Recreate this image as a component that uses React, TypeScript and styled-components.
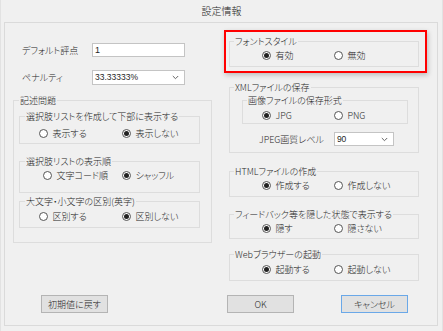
import styled, { createGlobalStyle } from "styled-components";

const GlobalStyle = createGlobalStyle`
  * {
    box-sizing: border-box;
  }
  html, body {
    margin: 0;
    padding: 0;
  }
  body {
    background: #f0f0f0;
    font-family: "Noto Sans CJK JP", "Noto Sans", sans-serif;
    font-size: 9px;
    font-weight: 300;
    font-feature-settings: "palt";
    color: #262626;
  }
`;

type Choice = { label: string; checked?: boolean };

type GroupProps = {
  $mt?: number;
  $ml?: number;
  $mr?: number;
  $pt?: number;
  $pb?: number;
  $pr?: number;
  $pl?: number;
};

function App() {
  return (
    <Window>
      <GlobalStyle />
      <TitleBar>設定情報</TitleBar>
      <Panel>
        <Column>
          <FieldRow $mt={13}>
            <FieldLabel>デフォルト評点</FieldLabel>
            <TextBox>1</TextBox>
          </FieldRow>
          <FieldRow $mt={13}>
            <FieldLabel>ペナルティ</FieldLabel>
            <Select $w={93}>
              33.33333%
              <Chevron />
            </Select>
          </FieldRow>

          <Group $mt={8.5} $pl={5} $pr={11} $pb={14}>
            <Legend $lo={0}>記述問題</Legend>
            <Group $mt={3} $pt={4} $pb={3.5}>
              <Legend $lo={5}>選択肢リストを作成して下部に表示する</Legend>
              <RadioRow
                $pad={18.5}
                $col={83}
                items={[{ label: "表示する" }, { label: "表示しない", checked: true }]}
              />
            </Group>
            <Group $mt={10.5} $pt={1} $pb={10.5}>
              <Legend $lo={5}>選択肢リストの表示順</Legend>
              <RadioRow
                $pad={22.5}
                $col={79}
                items={[{ label: "文字コード順" }, { label: "シャッフル", checked: true }]}
              />
            </Group>
            <Group $mt={1.5} $pt={2} $pb={4.5}>
              <Legend $lo={5}>大文字・小文字の区別(英字)</Legend>
              <RadioRow
                $pad={18.5}
                $col={83}
                items={[{ label: "区別する" }, { label: "区別しない", checked: true }]}
              />
            </Group>
          </Group>
        </Column>

        <Column>
          <Highlight>
            <Group $pt={1.5} $pb={4}>
              <Legend>フォントスタイル</Legend>
              <RadioRow
                $pad={31.5}
                $col={72}
                items={[{ label: "有効", checked: true }, { label: "無効" }]}
              />
            </Group>
          </Highlight>

          <Group $mt={7.5} $ml={5} $mr={8} $pb={6}>
            <Legend>XMLファイルの保存</Legend>
            <Group $ml={12} $mr={10} $pt={2} $pb={1.5}>
              <Legend>画像ファイルの保存形式</Legend>
              <RadioRow
                $pad={18.5}
                $col={72}
                items={[{ label: "JPG", checked: true }, { label: "PNG" }]}
              />
            </Group>
            <QualityRow>
              <span>JPEG画質レベル</span>
              <Select $w={60}>
                90
                <Chevron />
              </Select>
            </QualityRow>
          </Group>

          <Group $mt={11.5} $ml={5} $mr={8} $pt={1.5} $pb={4}>
            <Legend>HTMLファイルの作成</Legend>
            <RadioRow
              $pad={31.5}
              $col={72}
              items={[{ label: "作成する", checked: true }, { label: "作成しない" }]}
            />
          </Group>

          <Group $mt={10.5} $ml={5} $mr={8} $pt={1} $pb={3.5}>
            <Legend>フィードバック等を隠した状態で表示する</Legend>
            <RadioRow
              $pad={31.5}
              $col={72}
              items={[{ label: "隠す", checked: true }, { label: "隠さない" }]}
            />
          </Group>

          <Group $mt={8.5} $ml={5} $mr={8} $pt={2} $pb={4.5}>
            <Legend>Webブラウザーの起動</Legend>
            <RadioRow
              $pad={31.5}
              $col={72}
              items={[{ label: "起動する", checked: true }, { label: "起動しない" }]}
            />
          </Group>
        </Column>

        <ButtonCell>
          <Button $ml={28}>初期値に戻す</Button>
        </ButtonCell>
        <ButtonCell>
          <Button $ml={3}>OK</Button>
          <Button $ml={47} $focused>
            キャンセル
          </Button>
        </ButtonCell>
      </Panel>
    </Window>
  );
}

function RadioRow({ items, $pad, $col }: { items: Choice[]; $pad: number; $col: number }) {
  return (
    <Choices $pad={$pad} $col={$col}>
      {items.map((it) => (
        <Choice key={it.label}>
          <Dot $checked={!!it.checked} />
          {it.label}
        </Choice>
      ))}
    </Choices>
  );
}

function Chevron() {
  return (
    <ChevronSvg width="7" height="5" viewBox="0 0 7 5">
      <path d="M0.8 1 L3.5 3.7 L6.2 1" fill="none" stroke="#666" strokeWidth="1" />
    </ChevronSvg>
  );
}

const Window = styled.div`
  width: 443px;
  height: 331px;
  display: flex;
  flex-direction: column;
  border-left: 1px solid #e2e2e2;
  border-right: 1px solid #e2e2e2;
`;

const TitleBar = styled.div`
  height: 22px;
  display: flex;
  align-items: center;
  justify-content: center;
  font-size: 10px;
  padding-bottom: 2px;
`;

const Panel = styled.div`
  height: 304px;
  margin: 0 4px 0 3px;
  border: 1px solid #dadada;
  padding: 7px 10px 12px 8px;
  display: grid;
  grid-template-columns: 199px 203px;
  grid-template-rows: 1fr auto;
  column-gap: 12px;
`;

const Column = styled.div`
  display: flex;
  flex-direction: column;
`;

const FieldRow = styled.div<{ $mt: number }>`
  display: flex;
  align-items: center;
  margin-top: ${(p) => p.$mt}px;
  padding-left: 9px;
`;

const FieldLabel = styled.span`
  width: 70px;
  line-height: 13px;
`;

const TextBox = styled.div`
  width: 93px;
  height: 14px;
  background: #fff;
  border: 1px solid #c4c4c4;
  padding-left: 2px;
  line-height: 12px;
  font-family: "Liberation Sans", sans-serif;
`;

const Select = styled.div<{ $w: number }>`
  width: ${(p) => p.$w}px;
  height: 15px;
  background: #fff;
  border: 1px solid #c4c4c4;
  padding: 0 5px 0 2px;
  display: flex;
  align-items: center;
  justify-content: space-between;
  line-height: 13px;
  font-family: "Liberation Sans", sans-serif;
  font-size: 8.5px;
`;

const ChevronSvg = styled.svg`
  display: block;
`;

const Group = styled.fieldset<GroupProps>`
  margin: ${(p) => p.$mt ?? 0}px ${(p) => p.$mr ?? 0}px 0 ${(p) => p.$ml ?? 0}px;
  padding: ${(p) => p.$pt ?? 0}px ${(p) => p.$pr ?? 0}px ${(p) => p.$pb ?? 0}px
    ${(p) => p.$pl ?? 0}px;
  border: 1px solid #dddddd;
  min-width: 0;
`;

const Legend = styled.legend<{ $lo?: number }>`
  margin-left: ${(p) => p.$lo ?? 4}px;
  padding: 0 1px;
  line-height: 13px;
  white-space: nowrap;
`;

const Choices = styled.div<{ $pad: number; $col: number }>`
  display: grid;
  grid-template-columns: ${(p) => p.$col}px auto;
  padding-left: ${(p) => p.$pad}px;
  height: 13px;
`;

const Choice = styled.label`
  display: flex;
  align-items: center;
  gap: 5px;
  line-height: 13px;
  white-space: nowrap;
`;

const Dot = styled.span<{ $checked: boolean }>`
  width: 9px;
  height: 9px;
  border-radius: 50%;
  border: 1px solid #555;
  background: #fff;
  display: flex;
  align-items: center;
  justify-content: center;
  flex-shrink: 0;

  &::after {
    content: "";
    width: 5px;
    height: 5px;
    border-radius: 50%;
    background: ${(p) => (p.$checked ? "#222" : "transparent")};
  }
`;

const Highlight = styled.div`
  border: 2px solid #ff0000;
  padding: 2.5px 6px 4px 3px;
  box-shadow: 1px 2px 5px rgba(0, 0, 0, 0.22);
`;

const QualityRow = styled.div`
  display: flex;
  align-items: center;
  margin-top: 8px;
  padding-left: 29px;
  height: 14px;
  gap: 10px;

  & > div {
    height: 14px;
  }
`;

const ButtonCell = styled.div`
  display: flex;
  align-items: flex-end;
`;

const Button = styled.button<{ $ml: number; $focused?: boolean }>`
  margin-left: ${(p) => p.$ml}px;
  width: 67px;
  height: 18px;
  padding: 0;
  background: #e1e1e1;
  border: 1px solid ${(p) => (p.$focused ? "#6aa8e8" : "#b4b4b4")};
  font-family: inherit;
  font-size: 9px;
  font-weight: 300;
  font-feature-settings: "palt";
  color: #262626;
`;

export default App;
